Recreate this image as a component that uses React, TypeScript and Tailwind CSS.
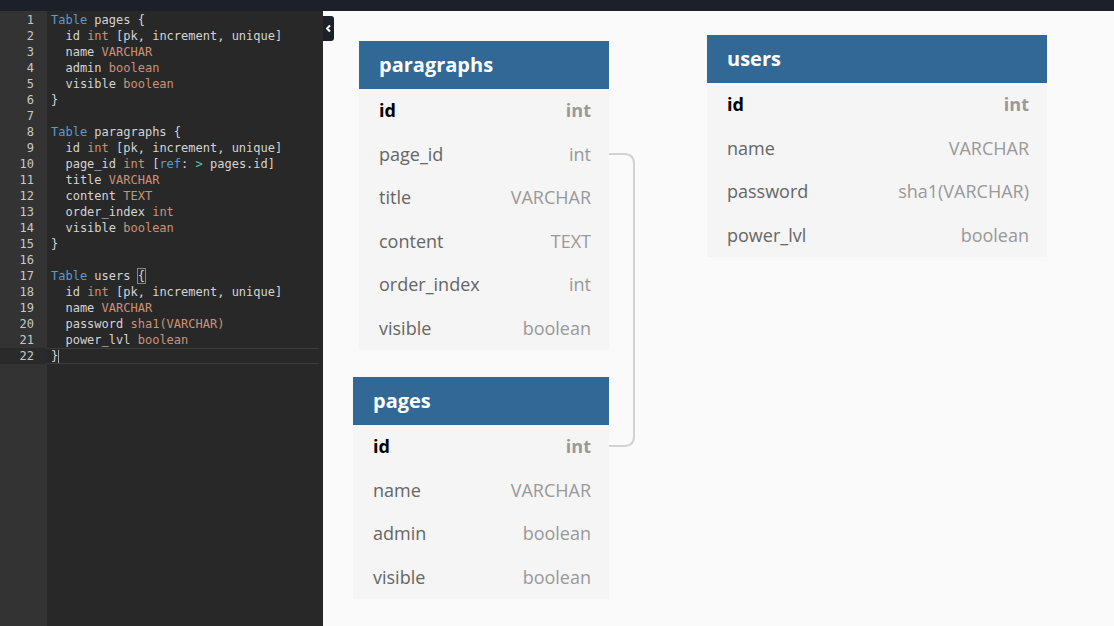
import React from "react";

type Seg = [string, string];
const C = {
  kw: "text-[#569cd6]",
  tx: "text-[#d4d4d4]",
  ty: "text-[#ce9178]",
  op: "text-[#4ec9b0]",
};

const lines: Seg[][] = [
  [["Table", C.kw], [" pages {", C.tx]],
  [["  id ", C.tx], ["int", C.ty], [" [pk, increment, unique]", C.tx]],
  [["  name ", C.tx], ["VARCHAR", C.ty]],
  [["  admin ", C.tx], ["boolean", C.ty]],
  [["  visible ", C.tx], ["boolean", C.ty]],
  [["}", C.tx]],
  [],
  [["Table", C.kw], [" paragraphs {", C.tx]],
  [["  id ", C.tx], ["int", C.ty], [" [pk, increment, unique]", C.tx]],
  [["  page_id ", C.tx], ["int", C.ty], [" [", C.tx], ["ref", C.kw], [": ", C.tx], [">", C.op], [" pages.id]", C.tx]],
  [["  title ", C.tx], ["VARCHAR", C.ty]],
  [["  content ", C.tx], ["TEXT", C.ty]],
  [["  order_index ", C.tx], ["int", C.ty]],
  [["  visible ", C.tx], ["boolean", C.ty]],
  [["}", C.tx]],
  [],
  [["Table", C.kw], [" users ", C.tx], ["{", "text-[#d4d4d4] outline outline-1 outline-[#888]"]],
  [["  id ", C.tx], ["int", C.ty], [" [pk, increment, unique]", C.tx]],
  [["  name ", C.tx], ["VARCHAR", C.ty]],
  [["  password ", C.tx], ["sha1(", C.ty], ["VARCHAR", C.ty], [")", C.ty]],
  [["  power_lvl ", C.tx], ["boolean", C.ty]],
  [["}", C.tx]],
];

type Field = { name: string; type: string; pk?: boolean };

function TableCard({
  title,
  fields,
  className,
}: {
  title: string;
  fields: Field[];
  className: string;
}) {
  return (
    <div className={`absolute ${className}`}>
      <div className="h-[48px] bg-[#316896] flex items-center pl-[20px] text-white text-[20px] font-bold">
        {title}
      </div>
      <div className="bg-[#f5f5f5]">
        {fields.map((f, i) => (
          <div
            key={i}
            className="h-[43.5px] flex items-center justify-between pl-[20px] pr-[18px] text-[18px]"
          >
            <span className={f.pk ? "font-bold text-black" : "text-[#666]"}>{f.name}</span>
            <span className={f.pk ? "font-bold text-[#999]" : "text-[#999]"}>{f.type}</span>
          </div>
        ))}
      </div>
    </div>
  );
}

export default function App() {
  return (
    <div className="w-[1114px] h-[626px] flex flex-col overflow-hidden bg-[#fafafa]">
      <div className="h-[11px] bg-[#1c2029] shrink-0" />
      <div className="flex flex-1 min-h-0">
        {/* Editor */}
        <div
          className="w-[323px] shrink-0 flex bg-[#282828] text-[12px] leading-[16px]"
          style={{ fontFamily: '"DejaVu Sans Mono", "Liberation Mono", monospace' }}
        >
          <div className="w-[47px] bg-[#333333] shrink-0 pt-[1px]">
            {lines.map((_, i) => (
              <div
                key={i}
                className={`h-[16px] pr-[13px] text-right text-[#c8c8c8] ${
                  i === 21 ? "bg-[#2a2a2a]" : ""
                }`}
              >
                {i + 1}
              </div>
            ))}
          </div>
          <div className="flex-1 pr-[4px] pt-[1px]">
            {lines.map((segs, i) => (
              <div
                key={i}
                className={`h-[16px] pl-[4px] whitespace-pre ${
                  i === 21 ? "border-y border-[#3c3c3c] leading-[14px]" : ""
                }`}
              >
                {segs.map(([t, c], j) => (
                  <span key={j} className={c}>
                    {t}
                  </span>
                ))}
                {i === 21 && <span className="inline-block w-px h-[13px] bg-[#aaa] align-middle" />}
              </div>
            ))}
          </div>
        </div>

        {/* Canvas */}
        <div
          className="relative flex-1"
          style={{ fontFamily: '"Open Sans", "Noto Sans", sans-serif' }}
        >
          <div className="absolute left-0 top-[5px] w-[11px] h-[25px] bg-[#1c2029] rounded-r-[3px] flex items-center justify-center">
            <svg width="7" height="9" viewBox="0 0 7 9">
              <path d="M5 1.5 L2 4.5 L5 7.5" stroke="white" strokeWidth="2" fill="none" />
            </svg>
          </div>

          <svg className="absolute left-0 top-0" width="791" height="615">
            <path
              d="M286 143 H301 Q311 143 311 153 V425 Q311 435 301 435 H286"
              stroke="#d2d2d2"
              strokeWidth="2"
              fill="none"
            />
          </svg>

          <TableCard
            title="paragraphs"
            className="left-[36px] top-[30px] w-[250px]"
            fields={[
              { name: "id", type: "int", pk: true },
              { name: "page_id", type: "int" },
              { name: "title", type: "VARCHAR" },
              { name: "content", type: "TEXT" },
              { name: "order_index", type: "int" },
              { name: "visible", type: "boolean" },
            ]}
          />
          <TableCard
            title="pages"
            className="left-[30px] top-[366px] w-[256px]"
            fields={[
              { name: "id", type: "int", pk: true },
              { name: "name", type: "VARCHAR" },
              { name: "admin", type: "boolean" },
              { name: "visible", type: "boolean" },
            ]}
          />
          <TableCard
            title="users"
            className="left-[384px] top-[24px] w-[340px]"
            fields={[
              { name: "id", type: "int", pk: true },
              { name: "name", type: "VARCHAR" },
              { name: "password", type: "sha1(VARCHAR)" },
              { name: "power_lvl", type: "boolean" },
            ]}
          />
        </div>
      </div>
    </div>
  );
}
